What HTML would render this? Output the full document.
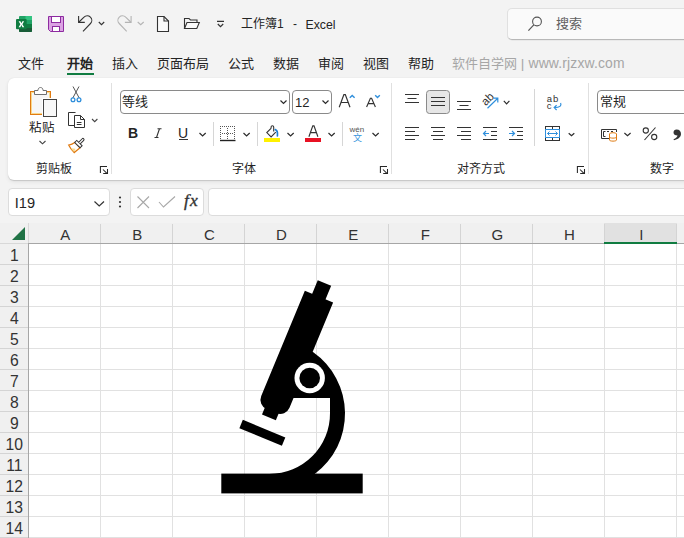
<!DOCTYPE html>
<html lang="zh-CN">
<head>
<meta charset="utf-8">
<style>
*{margin:0;padding:0;box-sizing:border-box}
html,body{width:684px;height:538px;overflow:hidden;background:#f3f3f3;font-family:"Liberation Sans",sans-serif;color:#242424}
.a{position:absolute}
.t{position:absolute;white-space:nowrap;line-height:1}
svg{position:absolute;overflow:visible}
</style>
</head>
<body>
<!-- title bar -->
<div class="t" style="left:241px;top:18px;font-size:12px">工作簿1</div>
<div class="t" style="left:293px;top:18px;font-size:12px">-</div>
<div class="t" style="left:305.5px;top:18.5px;font-size:12.3px">Excel</div>
<!-- search -->
<div class="a" style="left:507px;top:8px;width:200px;height:32px;background:#fafafa;border:1px solid #e0e0e0;border-bottom-color:#b8b8b8;border-radius:5px;box-shadow:0 0.5px 0.5px rgba(0,0,0,0.08)"></div>
<div class="t" style="left:556px;top:17px;font-size:13px;color:#616161">搜索</div>


<!-- titlebar icons -->
<svg style="left:0;top:0" width="684" height="100" fill="none">
<rect x="19" y="16" width="13" height="16" rx="1" fill="#21a366"/>
<rect x="25.5" y="16" width="6.5" height="4" fill="#33c481"/>
<rect x="19" y="24" width="13" height="4" fill="#107c41"/>
<path d="M19 28H32V31A1 1 0 0 1 31 32H20A1 1 0 0 1 19 31Z" fill="#185c37"/>
<rect x="16" y="19" width="10.7" height="10.3" rx="1" fill="#107c41"/>
<path d="M18.6 21.2H20.4L21.4 23.3L22.4 21.2H24.1L22.4 24.2L24.2 27.2H22.4L21.4 25.1L20.4 27.2H18.6L20.4 24.2Z" fill="#fff"/>
<path d="M48.5 16.5H63.5V31.5H50.5L48.5 29.5Z" fill="#dba2e3" stroke="#8d2ba0"/>
<rect x="51.5" y="16.5" width="9" height="6" fill="#fff" stroke="#8d2ba0"/>
<rect x="52.5" y="26.5" width="7" height="5" fill="#fff" stroke="#8d2ba0"/>
<g stroke="#333" stroke-width="1.1">
<path d="M84.8 22.4H78.6V16"/>
<path d="M79 22L84 17.2A4.4 4.4 0 0 1 90.5 23.5L83 31.3"/>
<path d="M98.8 22L101.5 24.7L104.2 22"/>
</g>
<g stroke="#b4b4b4" stroke-width="1.1">
<path d="M124.9 22.4H131.1V16"/>
<path d="M130.7 22L125.7 17.2A4.4 4.4 0 0 0 119.2 23.5L126.7 31.3"/>
<path d="M137.7 22L140.7 24.7L143.7 22"/>
</g>
<path d="M157.5 16.5H164L168.5 21V31.5H157.5Z" fill="#fafafa" stroke="#333" stroke-width="1.1"/>
<path d="M164 16.5V21H168.5" stroke="#333" stroke-width="1.1"/>
<path d="M184.5 28.5V18.5H189L190.5 20H197V22.5" stroke="#333" stroke-width="1.1"/>
<path d="M184.5 28.5L187 22.5H199.3L196.8 28.5Z" fill="#fafafa" stroke="#333" stroke-width="1.1"/>
<path d="M217 21.3H224M217.8 24L220.5 26.6L223.2 24" stroke="#333" stroke-width="1.2"/>
<circle cx="537" cy="21.5" r="4.4" stroke="#555" stroke-width="1.1"/>
<path d="M533.8 24.8L528.4 30.6" stroke="#555" stroke-width="1.2"/>
</svg>

<!-- tabs -->
<div class="t" style="left:18px;top:56.5px;font-size:13px">文件</div>
<div class="t" style="left:67px;top:56.5px;font-size:13px;font-weight:bold">开始</div>
<div class="a" style="left:67px;top:73px;width:27px;height:2px;background:#107c41"></div>
<div class="t" style="left:112px;top:56.5px;font-size:13px">插入</div>
<div class="t" style="left:157px;top:56.5px;font-size:13px">页面布局</div>
<div class="t" style="left:228px;top:56.5px;font-size:13px">公式</div>
<div class="t" style="left:273px;top:56.5px;font-size:13px">数据</div>
<div class="t" style="left:318px;top:56.5px;font-size:13px">审阅</div>
<div class="t" style="left:363px;top:56.5px;font-size:13px">视图</div>
<div class="t" style="left:408px;top:56.5px;font-size:13px">帮助</div>
<div class="t" style="left:452px;top:56.5px;font-size:13px;color:#a6a6a6">软件自学网</div>
<div class="t" style="left:520.8px;top:57px;font-size:13.7px;color:#a6a6a6">|</div>
<div class="t" style="left:528.5px;top:57px;font-size:13.9px;letter-spacing:0.15px;color:#a6a6a6">www.rjzxw.com</div>

<!-- ribbon card -->
<div class="a" style="left:8px;top:78px;width:700px;height:102px;background:#fff;border-radius:6px;box-shadow:0 0.5px 1px rgba(0,0,0,0.14),0 2px 4px rgba(0,0,0,0.07)"></div>


<!-- ribbon icons -->
<svg style="left:0;top:0" width="684" height="538" fill="none" stroke-linecap="butt">
<!-- separators -->
<path d="M111.5 83V174M391.5 83V174M588.5 83V174" stroke="#e0e0e0"/>
<path d="M213.5 122V146M257.5 122V146M342.5 122V146M534.5 89V146" stroke="#d6d6d6"/>
<!-- paste -->
<rect x="30.5" y="91.5" width="20" height="23" stroke="#e07b12" fill="#f6f6f6"/>
<rect x="31.5" y="92.5" width="18" height="21" stroke="#f9d88c"/>
<path d="M34.5 94.5V90.5H38C38 88.5 39 87.5 40.5 87.5C42 87.5 43 88.5 43 90.5H46.5V94.5Z" stroke="#707070" fill="#fff"/>
<rect x="42" y="98" width="16" height="20" fill="#fff"/>
<rect x="43.5" y="99.5" width="13" height="17" stroke="#444" fill="#f8f8f8"/>
<!-- scissors -->
<path d="M73 86.5L79.2 98M79 86.5L72.8 98" stroke="#555" stroke-width="1"/>
<circle cx="73" cy="99.7" r="1.9" stroke="#2f8fdc" stroke-width="1.3"/>
<circle cx="79" cy="99.7" r="1.9" stroke="#2f8fdc" stroke-width="1.3"/>
<!-- copy -->
<path d="M75.5 112.5H68.5V125.5H74.5" stroke="#333"/>
<path d="M74.5 115.5H80.5L84.5 119.5V127.5H74.5Z" stroke="#333" fill="#fff"/>
<path d="M80.5 115.5V119.5H84.5M76.8 122.5H81.5M76.8 124.5H81.5" stroke="#333"/>
<path d="M92 119L94.7 121.7L97.4 119" stroke="#444" stroke-width="1.1"/>
<!-- format painter -->
<g transform="translate(78.3,144.2) rotate(45)">
<path d="M-3.8 1.3H3.8L3 8.8C0 8.8 -3.6 8.4 -6.2 7.4C-4.7 5.3 -4 3.3 -3.8 1.3Z" stroke="#e07b12" stroke-width="1.25" fill="#fff"/>
<path d="M-2.5 8.2L2.5 8.5L1.3 5.2Z" fill="#f9d98c"/>
<rect x="-3.8" y="-1.6" width="7.6" height="2.9" stroke="#333" stroke-width="1" fill="#fff"/>
<path d="M-1.1 -1.6V-6.6C-1.1 -8 1.1 -8 1.1 -6.6V-1.6" stroke="#333" stroke-width="1" fill="#fff"/>
</g>
<!-- paste chevron -->
<path d="M39.5 141L42.5 143.8L45.5 141" stroke="#444" stroke-width="1.1"/>
<!-- launchers -->
<path d="M100.4 173V166.5H107M103 169.5L107.2 173.7M107.5 169V173.5H103.2" stroke="#262626" stroke-width="1.05"/>
<path d="M380.4 173V166.5H387M383 169.5L387.2 173.7M387.5 169V173.5H383.2" stroke="#262626" stroke-width="1.05"/>
<path d="M577.4 173V166.5H584M580 169.5L584.2 173.7M584.5 169V173.5H580.2" stroke="#262626" stroke-width="1.05"/>
</svg>


<!-- ribbon text -->
<div class="t" style="left:29px;top:121.5px;font-size:12.5px">粘贴</div>
<div class="t" style="left:36px;top:162.5px;font-size:12px">剪贴板</div>
<div class="t" style="left:232px;top:162.5px;font-size:12px">字体</div>
<div class="t" style="left:457px;top:162.5px;font-size:12px">对齐方式</div>
<div class="t" style="left:650px;top:162.5px;font-size:12px">数字</div>
<!-- font boxes -->
<div class="a" style="left:120px;top:90px;width:170px;height:24px;border:1px solid #8a8a8a;border-radius:4px"></div>
<div class="t" style="left:122px;top:95px;font-size:13px">等线</div>
<div class="a" style="left:292px;top:90px;width:40px;height:24px;border:1px solid #8a8a8a;border-radius:4px"></div>
<div class="t" style="left:295px;top:96px;font-size:13px">12</div>
<div class="a" style="left:597px;top:90px;width:120px;height:24px;border:1px solid #8a8a8a;border-radius:4px"></div>
<div class="t" style="left:600px;top:95px;font-size:13px">常规</div>
<div class="t" style="left:128px;top:126.3px;font-size:14px;font-weight:bold">B</div>
<div class="t" style="left:178px;top:126.3px;font-size:14px">U</div>
<div class="t" style="left:349.5px;top:126px;font-size:8px;color:#555">wén</div>
<div class="t" style="left:352.5px;top:134px;font-size:9px;color:#3a96dd">文</div>

<!-- formula bar -->
<div class="a" style="left:8px;top:188px;width:102px;height:28px;background:#fff;border:1px solid #dcdcdc;border-radius:4px"></div>
<div class="t" style="left:14.8px;top:195.6px;font-size:14.6px">I19</div>
<div class="a" style="left:130px;top:188px;width:74px;height:28px;background:#fff;border:1px solid #dcdcdc;border-radius:4px"></div>
<div class="a" style="left:208px;top:188px;width:500px;height:28px;background:#fff;border:1px solid #dcdcdc;border-radius:4px"></div>


<svg style="left:0;top:0" width="684" height="538" fill="none">
<g stroke="#2b2b2b" stroke-width="1.2">
<path d="M280.5 100.5L283.5 103.5L286.5 100.5"/>
<path d="M322.5 100.5L325.5 103.5L328.5 100.5"/>
<path d="M199.5 133L202.6 136L205.7 133"/>
<path d="M243.5 133L246.6 136L249.7 133"/>
<path d="M287.5 133L290.6 136L293.7 133"/>
<path d="M328.5 133L331.6 136L334.7 133"/>
<path d="M372.5 133L375.6 136L378.7 133"/>
<path d="M503.8 100.9L506.6 103.8L509.4 100.9"/>
<path d="M568.7 133.2L571.5 135.8L574.3 133.2"/>
<path d="M624.4 133L627.5 135.6L630.6 133"/>
</g>
<!-- A glyphs -->
<path d="M339.2 107.2L343.9 94.6H345.3L350 107.2M340.9 102.5H348.3" stroke="#333" stroke-width="1.2"/>
<path d="M366.6 107L370.4 98.2H371.6L375.4 107M368 103.6H374" stroke="#333" stroke-width="1.15"/>
<path d="M308.9 136.8L312.8 125.9H314L317.9 136.8M310.4 132.6H316.4" stroke="#333" stroke-width="1.15"/>
<path d="M157.5 128.8H161.5M154.5 137.5H158.5M159.5 128.8L156.5 137.5" stroke="#333" stroke-width="1.1"/>
<!-- grow/shrink carets -->
<path d="M349.8 97.8L352.2 95.4L354.6 97.8" stroke="#2f8fdc" stroke-width="1.4"/>
<path d="M375.2 95.3L377.5 97.6L379.8 95.3" stroke="#2f8fdc" stroke-width="1.4"/>
<!-- U underline -->
<path d="M179 139.5H188" stroke="#333"/>
<!-- borders -->
<path d="M220 126h1v1h-1zM222 126h1v1h-1zM224 126h1v1h-1zM226 126h1v1h-1zM228 126h1v1h-1zM230 126h1v1h-1zM232 126h1v1h-1zM234 126h1v1h-1zM220 128h1v1h-1zM234 128h1v1h-1zM220 130h1v1h-1zM234 130h1v1h-1zM220 132h1v1h-1zM234 132h1v1h-1zM220 134h1v1h-1zM234 134h1v1h-1zM220 136h1v1h-1zM234 136h1v1h-1zM220 138h1v1h-1zM234 138h1v1h-1zM222 133h1v1h-1zM224 133h1v1h-1zM226 133h1v1h-1zM228 133h1v1h-1zM230 133h1v1h-1zM232 133h1v1h-1zM227 128h1v1h-1zM227 130h1v1h-1zM227 132h1v1h-1zM227 134h1v1h-1zM227 136h1v1h-1zM227 138h1v1h-1z" fill="#555"/>
<path d="M220 140.5H235.5" stroke="#222" stroke-width="1.4"/>
<!-- fill -->
<rect x="264" y="138" width="16" height="4" fill="#fff100"/>
<path d="M271 128.3L266.8 132.6L271.1 136.9L275.8 132.2" stroke="#333" stroke-width="1.1" fill="#fafafa"/>
<path d="M271.1 128.5V127C271.1 125.4 273.7 125.4 273.7 127V131.5" stroke="#333" stroke-width="1.1"/>
<path d="M275.3 129.6C277 130.2 277.8 132.5 277.4 135.8" stroke="#1f7fd0" stroke-width="1.7" stroke-linecap="round"/>
<!-- font color -->
<rect x="305" y="138" width="16" height="4" fill="#e81123"/>
<!-- align top/mid/bottom -->
<rect x="426.5" y="90.5" width="23" height="23" rx="3" fill="#e6e6e6" stroke="#8a8a8a"/>
<g stroke="#333">
<path d="M405 94.5H419M407.5 98.5H416.5M405 102.5H419"/>
<path d="M431 97.5H445M431 101.5H445M431 105.5H445"/>
<path d="M457 101.5H471M459.5 105.5H468.5M457 109.5H471"/>
<path d="M405 127.5H419M405 131.5H415M405 135.5H419M405 139.5H415"/>
<path d="M431 127.5H445M433 131.5H443M431 135.5H445M433 139.5H443"/>
<path d="M457 127.5H471M461 131.5H471M457 135.5H471M461 139.5H471"/>
<path d="M483 127.5H497M491 131.5H497M491 135.5H497M483 139.5H497"/>
<path d="M509 127.5H523M517 131.5H523M517 135.5H523M509 139.5H523"/>
</g>
<path d="M489 133.5H483.5M486 131L483.5 133.5L486 136" stroke="#2f8fdc" stroke-width="1.2"/>
<path d="M509 133.5H514.5M512 131L514.5 133.5L512 136" stroke="#2f8fdc" stroke-width="1.2"/>
<!-- orientation -->
<text x="0" y="0" transform="translate(485.8,106.2) rotate(-45)" font-family="Liberation Sans" font-size="11.5" fill="#333" stroke="none">ab</text>
<path d="M487.5 108.2L497.8 98.2M493.5 98.2H497.8V102.5" stroke="#2f8fdc" stroke-width="1.2"/>
<!-- wrap -->
<text x="546.8" y="101.8" font-family="Liberation Sans" font-size="9.5" letter-spacing="0.8" fill="#333" stroke="none">ab</text>
<text x="546.8" y="109.3" font-family="Liberation Sans" font-size="9.5" fill="#333" stroke="none">c</text>
<path d="M560.6 103C561.8 105.8 560 107.6 554.2 107.6M556.6 105.2L554.2 107.6L556.6 110" stroke="#2f8fdc" stroke-width="1.2"/>
<!-- merge -->
<rect x="545.5" y="126.5" width="14" height="14" stroke="#333"/>
<path d="M552.5 126.5V129.5M552.5 137.5V140.5" stroke="#333"/>
<rect x="545.5" y="129.5" width="14" height="8" stroke="#2f8fdc" fill="#fff"/>
<path d="M547.5 133.5H557.5M549.5 131.5L547.5 133.5L549.5 135.5M555.5 131.5L557.5 133.5L555.5 135.5" stroke="#2f8fdc"/>
<!-- currency -->
<path d="M609 138.5H601.5V129.5H616.5V132" stroke="#333"/>
<path d="M605.5 131.5H603.5V136.5H605.5M607 131.5H609M611 131.5H613" stroke="#333"/>
<ellipse cx="613" cy="134" rx="3.5" ry="1.3" stroke="#e07b12" fill="#fff"/>
<path d="M609.5 134V140C609.5 141.5 616.5 141.5 616.5 140V134M609.5 137C609.5 138.5 616.5 138.5 616.5 137" stroke="#e07b12" fill="#fff"/>
<!-- percent -->
<g stroke="#333" stroke-width="1.1">
<path d="M655.5 127.5L644.5 140"/>
<circle cx="645.8" cy="130.5" r="2.6"/>
<circle cx="654.2" cy="137" r="2.6"/>
</g>
<!-- comma -->
<path d="M676.5 129.5C679.5 129.5 681 131.5 681 134C681 137 678 139.5 674 140.2L673.5 139.2C676 138.3 677.3 137 677.5 135.5C675 135.5 673.5 134.2 673.5 132.5C673.5 130.8 674.8 129.5 676.5 129.5Z" fill="#333"/>
<!-- formula bar -->
<path d="M94.5 201.5L99.2 206L104 201.5" stroke="#333" stroke-width="1.2"/>
<circle cx="120" cy="197.5" r="1.1" fill="#333"/>
<circle cx="120" cy="202" r="1.1" fill="#333"/>
<circle cx="120" cy="206.5" r="1.1" fill="#333"/>
<path d="M137.5 196.5L149 208M149 196.5L137.5 208" stroke="#a8a8a8" stroke-width="1.1"/>
<path d="M159 202L163.5 207L175 196.5" stroke="#a8a8a8" stroke-width="1.1"/>
<text x="184" y="206.3" font-family="Liberation Serif" font-style="italic" font-size="17.5" letter-spacing="1.2" fill="#333" stroke="#333" stroke-width="0.35">fx</text>
</svg>

<!-- grid -->
<div class="a" style="left:0;top:223px;width:684px;height:315px;background:#fff"></div>
<div class="a" style="left:0;top:223px;width:684px;height:20px;background:#f0f0f0"></div>
<div class="a" style="left:0;top:243px;width:28px;height:295px;background:#f0f0f0"></div>
<svg style="left:0;top:0" width="684" height="538" fill="none">
<rect x="604" y="223" width="73" height="20" fill="#e1e1e1"/>
<path d="M28 264.5H684M28 285.5H684M28 306.5H684M28 327.5H684M28 348.5H684M28 369.5H684M28 390.5H684M28 411.5H684M28 432.5H684M28 453.5H684M28 474.5H684M28 495.5H684M28 516.5H684M28 537.5H684M100.5 243V538M172.5 243V538M244.5 243V538M316.5 243V538M388.5 243V538M460.5 243V538M532.5 243V538M604.5 243V538M676.5 243V538" stroke="#e1e1e1"/>
<path d="M28.5 224V243M100.5 224V243M172.5 224V243M244.5 224V243M316.5 224V243M388.5 224V243M460.5 224V243M532.5 224V243M604.5 224V243M676.5 224V243M0 264.5H28M0 285.5H28M0 306.5H28M0 327.5H28M0 348.5H28M0 369.5H28M0 390.5H28M0 411.5H28M0 432.5H28M0 453.5H28M0 474.5H28M0 495.5H28M0 516.5H28M0 537.5H28" stroke="#d4d4d4"/>
<path d="M0 243.5H28M28.5 223V243" stroke="#d8d8d8"/>
<path d="M28 243.5H684M28.5 243V538" stroke="#a6a6a6"/>
<rect x="604" y="242" width="73" height="2" fill="#107c41"/>
<path d="M25 227V240H12Z" fill="#217346"/>
<g font-family="Liberation Sans" font-size="15" fill="#333"><text x="65.3" y="240" text-anchor="middle">A</text><text x="137.3" y="240" text-anchor="middle">B</text><text x="209.3" y="240" text-anchor="middle">C</text><text x="281.3" y="240" text-anchor="middle">D</text><text x="353.3" y="240" text-anchor="middle">E</text><text x="425.3" y="240" text-anchor="middle">F</text><text x="497.3" y="240" text-anchor="middle">G</text><text x="569.3" y="240" text-anchor="middle">H</text><text x="641.3" y="240" text-anchor="middle">I</text><text x="14.3" y="260.5" text-anchor="middle" font-size="15.7">1</text><text x="14.3" y="281.5" text-anchor="middle" font-size="15.7">2</text><text x="14.3" y="302.5" text-anchor="middle" font-size="15.7">3</text><text x="14.3" y="323.5" text-anchor="middle" font-size="15.7">4</text><text x="14.3" y="344.5" text-anchor="middle" font-size="15.7">5</text><text x="14.3" y="365.5" text-anchor="middle" font-size="15.7">6</text><text x="14.3" y="386.5" text-anchor="middle" font-size="15.7">7</text><text x="14.3" y="407.5" text-anchor="middle" font-size="15.7">8</text><text x="14.3" y="428.5" text-anchor="middle" font-size="15.7">9</text><text x="14.3" y="449.5" text-anchor="middle" font-size="15.7">10</text><text x="14.3" y="470.5" text-anchor="middle" font-size="15.7">11</text><text x="14.3" y="491.5" text-anchor="middle" font-size="15.7">12</text><text x="14.3" y="512.5" text-anchor="middle" font-size="15.7">13</text><text x="14.3" y="533.5" text-anchor="middle" font-size="15.7">14</text></g>
</svg>
<!-- microscope -->
<svg style="left:0;top:0" width="684" height="538">
<path d="M313 352A75.3 75.3 0 0 1 314.7 474H269.5A60.5 60.5 0 0 0 330 413V398H290V352Z" fill="#000"/>
<g transform="translate(305.4,291) rotate(22.5)" fill="#000">
<rect x="7.3" y="-14.7" width="14.5" height="16"/>
<path d="M-0.6 0H30V114A10 10 0 0 1 20 124H9.4A10 10 0 0 1 -0.6 114Z"/>
<rect x="7.2" y="120" width="15" height="10.8"/>
<rect x="-8.5" y="143" width="46" height="9"/>
</g>
<circle cx="309.7" cy="378" r="15.2" fill="#fff"/>
<circle cx="309.7" cy="378" r="10.3" fill="#000"/>
<rect x="221.3" y="473.6" width="141.4" height="19.8" fill="#000"/>
</svg>

</body>
</html>
